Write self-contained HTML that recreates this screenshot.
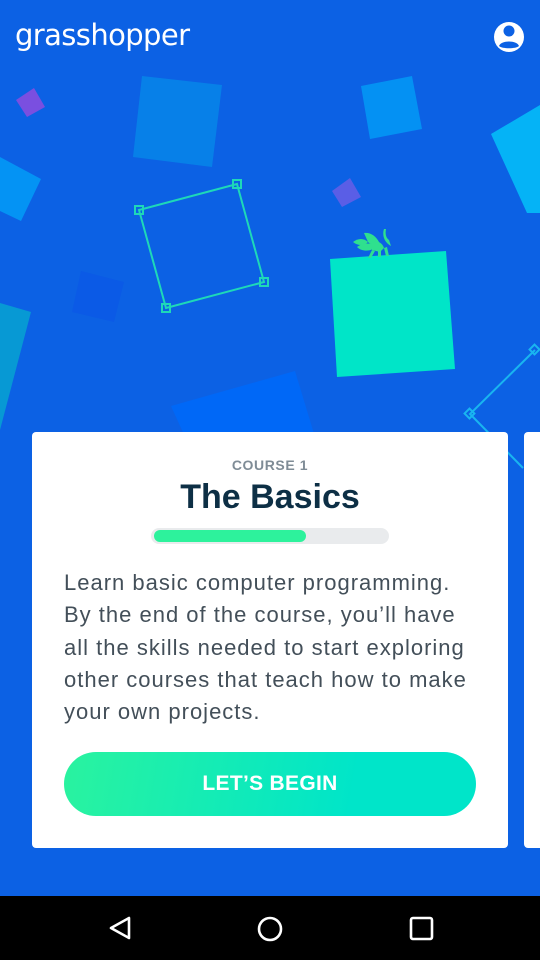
<!DOCTYPE html>
<html><head><meta charset="utf-8"><style>
*{margin:0;padding:0;box-sizing:border-box}
html,body{width:540px;height:960px;overflow:hidden}
body{background:#0c61e4;font-family:"Liberation Sans",sans-serif;position:relative}
.logo{position:absolute;left:15px;top:18px;color:#fff;font-size:29px;letter-spacing:-0.6px;font-family:"DejaVu Sans","Liberation Sans",sans-serif}
.card{position:absolute;left:32px;top:432px;width:476px;height:416px;background:#fff;border-radius:4px}
.peek{position:absolute;left:524px;top:432px;width:40px;height:416px;background:#fff;border-radius:4px}
.c1{position:absolute;top:25px;width:100%;text-align:center;font-size:14px;font-weight:bold;color:#7f8c96;letter-spacing:0.6px}
.title{position:absolute;top:46px;width:100%;text-align:center;font-size:34px;font-weight:bold;color:#0d2f45}
.track{position:absolute;left:119px;top:96px;width:238px;height:16px;border-radius:8px;background:#e9ebed}
.fill{position:absolute;left:3px;top:2px;width:152px;height:12px;border-radius:6px;background:#2df29c}
.desc{position:absolute;left:32px;top:135px;font-size:22px;letter-spacing:1px;line-height:32.3px;color:#434f59;white-space:nowrap}
.btn{position:absolute;left:32px;top:320px;width:412px;height:64px;border-radius:32px;background:linear-gradient(100deg,#2af39f,#00e5c9 70%);color:#fff;font-size:21px;font-weight:bold;text-align:center;line-height:64px;letter-spacing:0.3px}
.nav{position:absolute;left:0;top:896px;width:540px;height:64px;background:#000}
</style></head><body>
<svg width="540" height="896" style="position:absolute;left:0;top:0">
<polygon points="16,100 34,88 45,107 27,117" fill="#7a4fe0"/>
<polygon points="133,157 142,76 222,85 212,167" fill="#0780e8"/>
<polygon points="361,86 412,76 422,129 370,139" fill="#0491f3"/>
<polygon points="491,134 540,105 540,213 527,213" fill="#05b3f6"/>
<polygon points="0,157 41,179 21,221 0,211" fill="#0493f4"/>
<polygon points="332,191 350,178 361,197 342,207" fill="#5a5ee6"/>
<polygon points="81,271 124,282 114,322 72,312" fill="#0b5ae6"/>
<polygon points="0,303 31,312 0,430" fill="#0799d4"/>
<polygon points="171,406 295,371 325,470 200,470" fill="#0068f7"/>
<polygon points="330,259 446,251 455,369 337,377" fill="#00e5c8"/>
<g fill="none" stroke="#1ed8b8" stroke-width="2">
<polygon points="139,210 237,184 264,282 166,308"/>
<rect x="135" y="206" width="8" height="8"/><rect x="233" y="180" width="8" height="8"/><rect x="260" y="278" width="8" height="8"/><rect x="162" y="304" width="8" height="8"/>
</g>
<g fill="none" stroke="#19b5f0" stroke-width="2">
<polyline points="535,350 470,414 523,468"/>
<rect x="531" y="346" width="7" height="7" transform="rotate(45 534.5 349.5)"/>
<rect x="466" y="410" width="7" height="7" transform="rotate(45 469.5 413.5)"/>
</g>
<g fill="#2fe08e">
<path d="M353,242 C358,238 364,238 368,242 C364,246 358,246 353,242Z"/>
<path d="M357,247 C362,243 370,242 376,246 C372,252 362,252 357,247Z"/>
<path d="M364,233 C370,232 376,236 379,242 C376,246 372,246 368,242Z"/>
<path d="M372,242 C376,240 382,242 384,248 L380,252 L372,250Z"/>
<path d="M384,229 C382,235 384,242 391,246 L389,240 C386,238 385,234 386,229Z"/>
<path d="M372,250 L368,258 L371,258 L375,251Z M378,251 L378,257 L381,257 L381,251Z M384,248 L386,256 L389,256 L387,247Z"/>
</g>
<g>
<circle cx="509" cy="37" r="15" fill="#fff"/>
<circle cx="509" cy="31" r="5.5" fill="#0c61e4"/>
<path d="M499,46 C501,40 517,40 519,46 C516,49 502,49 499,46Z" fill="#0c61e4"/>
</g>
</svg>
<div class="logo">grasshopper</div>
<div class="card">
<div class="c1">COURSE 1</div>
<div class="title">The Basics</div>
<div class="track"><div class="fill"></div></div>
<div class="desc">Learn basic computer programming.<br>By the end of the course, you’ll have<br>all the skills needed to start exploring<br>other courses that teach how to make<br>your own projects.</div>
<div class="btn">LET’S BEGIN</div>
</div>
<div class="peek"></div>
<div class="nav">
<svg width="540" height="64">
<path d="M129,22 L129,42 L111,32Z" fill="none" stroke="#fff" stroke-width="2.6" stroke-linejoin="round"/>
<circle cx="270" cy="33" r="11" fill="none" stroke="#fff" stroke-width="2.6"/>
<rect x="411" y="22" width="21" height="21" rx="2" fill="none" stroke="#fff" stroke-width="2.6"/>
</svg>
</div>
</body></html>
